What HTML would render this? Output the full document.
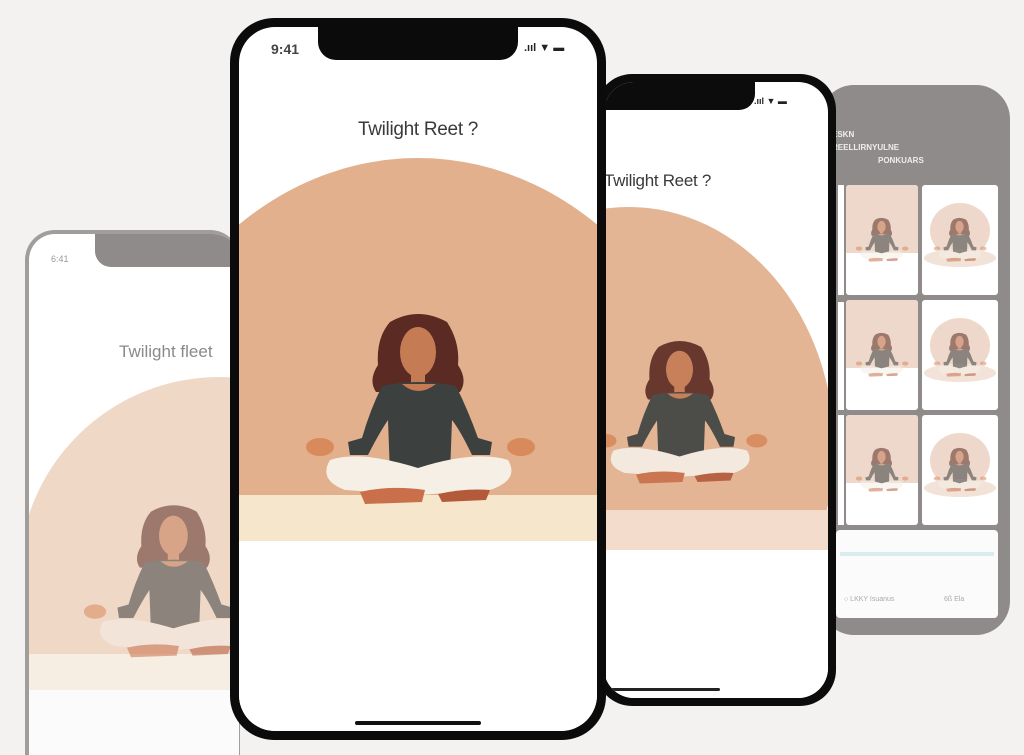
<!DOCTYPE html>
<html style="overflow:hidden;height:755px"><head><meta charset="utf-8">
<style>
*{margin:0;padding:0;box-sizing:border-box}
html,body{overflow:hidden}
body{width:1024px;height:755px;background:#f3f2f0;position:relative;overflow:hidden;font-family:"Liberation Sans",sans-serif}
.abs{position:absolute}
.t{color:#3a3a3a;font-size:19px;letter-spacing:-0.3px}
</style></head><body>
<svg width="0" height="0" style="position:absolute;top:0;left:0">
<defs>
<g id="w">
<path d="M90 12 Q118 -4 147 12 Q160 32 158 55 Q168 70 160 82 L76 82 Q68 70 78 55 Q76 28 90 12Z" fill="#5b2a22"/>
<ellipse cx="118" cy="42" rx="18" ry="25" fill="#c57b54"/>
<rect x="111" y="60" width="14" height="14" fill="#c57b54"/>
<path d="M82 76 Q118 68 156 76 Q168 100 178 128 L192 132 L190 145 L172 145 Q160 120 152 110 L150 165 L90 165 L88 110 Q78 125 68 145 L50 145 L48 132 L62 128 Q70 100 82 76Z" fill="#3c4140"/>
<path d="M102 74 Q118 88 136 74Z" fill="#c57b54"/>
<ellipse cx="20" cy="137" rx="14" ry="9" fill="#d98a5c"/>
<ellipse cx="221" cy="137" rx="14" ry="9" fill="#d98a5c"/>
<path d="M30 150 Q60 140 118 158 Q175 140 208 150 Q220 170 190 180 L118 185 L45 180 Q18 170 30 150Z" fill="#f5efe6"/>
<path d="M60 182 Q90 175 125 180 L122 192 L65 194Z" fill="#c9704a"/>
<path d="M138 184 Q165 178 190 180 L186 190 L142 192Z" fill="#b35a3a"/>
</g>
</defs>
</svg>

<div class="abs" style="left:820px;top:85px;width:190px;height:550px;background:#8f8b8a;border-radius:34px;"></div>
<div class="abs" style="left:832px;top:128px;color:#eee;font-size:8px;line-height:13px;font-weight:bold">ESKN<br>REELLIRNYULNE<br><span style="padding-left:46px">PONKUARS</span></div>
<div class="abs" style="left:838px;top:185px;width:162px;height:345px">
 <div class="abs" style="left:0;top:0;width:6px;height:110px;background:#fff"></div>
 <div class="abs" style="left:0;top:117px;width:6px;height:108px;background:#fff"></div>
 <div class="abs" style="left:0;top:230px;width:6px;height:110px;background:#fff"></div>
</div>
<div class="abs" style="left:846px;top:185px;width:72px;height:110px;background:#fff;border-radius:3px;overflow:hidden"><div style="height:68px;background:#eed8cb"></div><svg class="abs" style="left:8px;top:32px" width="56" height="46" viewBox="0 0 240 200" opacity=".55"><use href="#w"/></svg></div>
<div class="abs" style="left:922px;top:185px;width:76px;height:110px;background:#fff;border-radius:3px;overflow:hidden"><div class="abs" style="left:8px;top:18px;width:60px;height:55px;border-radius:50%;background:#eed8cb"></div><div class="abs" style="left:2px;top:64px;width:72px;height:18px;border-radius:50%;background:#f2e2d8"></div><svg class="abs" style="left:10px;top:32px" width="56" height="46" viewBox="0 0 240 200" opacity=".55"><use href="#w"/></svg></div>
<div class="abs" style="left:846px;top:300px;width:72px;height:110px;background:#fff;border-radius:3px;overflow:hidden"><div style="height:68px;background:#eed8cb"></div><svg class="abs" style="left:8px;top:32px" width="56" height="46" viewBox="0 0 240 200" opacity=".55"><use href="#w"/></svg></div>
<div class="abs" style="left:922px;top:300px;width:76px;height:110px;background:#fff;border-radius:3px;overflow:hidden"><div class="abs" style="left:8px;top:18px;width:60px;height:55px;border-radius:50%;background:#eed8cb"></div><div class="abs" style="left:2px;top:64px;width:72px;height:18px;border-radius:50%;background:#f2e2d8"></div><svg class="abs" style="left:10px;top:32px" width="56" height="46" viewBox="0 0 240 200" opacity=".55"><use href="#w"/></svg></div>
<div class="abs" style="left:846px;top:415px;width:72px;height:110px;background:#fff;border-radius:3px;overflow:hidden"><div style="height:68px;background:#eed8cb"></div><svg class="abs" style="left:8px;top:32px" width="56" height="46" viewBox="0 0 240 200" opacity=".55"><use href="#w"/></svg></div>
<div class="abs" style="left:922px;top:415px;width:76px;height:110px;background:#fff;border-radius:3px;overflow:hidden"><div class="abs" style="left:8px;top:18px;width:60px;height:55px;border-radius:50%;background:#eed8cb"></div><div class="abs" style="left:2px;top:64px;width:72px;height:18px;border-radius:50%;background:#f2e2d8"></div><svg class="abs" style="left:10px;top:32px" width="56" height="46" viewBox="0 0 240 200" opacity=".55"><use href="#w"/></svg></div>
<div class="abs" style="left:836px;top:530px;width:162px;height:88px;background:#fbfbfb;border-radius:4px"><div class="abs" style="left:4px;top:22px;width:154px;height:4px;background:#dbecef"></div><div class="abs" style="left:8px;top:66px;font-size:7px;color:#aaa">○ LKKY Isuanus</div><div class="abs" style="left:108px;top:66px;font-size:7px;color:#aaa">6ß Ela</div></div>

<div class="abs" style="left:25px;top:230px;width:215px;height:525px;background:#a09d9b;border-radius:30px 30px 0 0;"></div>
<div class="abs" style="left:29px;top:234px;width:210px;height:521px;background:#fff;border-radius:26px 26px 0 0;overflow:hidden">
 <div class="abs" style="left:66px;top:0;width:160px;height:33px;background:#8f8b8a;border-radius:0 0 0 16px"></div>
 <div class="abs" style="left:22px;top:20px;font-size:9px;color:#999">6:41</div>
 <div class="abs" style="left:90px;top:108px;font-size:17px;color:#8a8a8a;white-space:nowrap">Twilight fleet</div>
 <div class="abs" style="left:-10px;top:143px;width:400px;height:378px;border-radius:200px 200px 0 0;background:#f0d8c7"></div>
 <div class="abs" style="left:0;top:420px;width:210px;height:36px;background:#f6ede3"></div>
 <div class="abs" style="left:0;top:456px;width:210px;height:65px;background:#fbfbfb"></div>
 <svg class="abs" style="left:50px;top:268px" width="192" height="160" viewBox="0 0 240 200" opacity=".55"><use href="#w"/></svg>
</div>

<div class="abs" style="left:596px;top:74px;width:240px;height:632px;background:#0c0c0c;border-radius:36px;"></div>
<div class="abs" style="left:604px;top:82px;width:224px;height:616px;background:#fff;border-radius:30px;overflow:hidden">
 <div class="abs" style="left:-4px;top:-8px;width:155px;height:36px;background:#0c0c0c;border-radius:0 0 16px 0"></div>
 <div class="abs" style="left:150px;top:14px;font-size:9px;color:#222;font-weight:bold">.ııl ▼ ▬</div>
 <div class="abs t" style="left:0px;top:89px;font-size:17px;white-space:nowrap">Twilight Reet ?</div>
 <div class="abs" style="left:-180px;top:125px;width:410px;height:480px;border-radius:50%;background:#e3b595"></div>
 <div class="abs" style="left:0;top:428px;width:224px;height:40px;background:#f3dccb"></div>
 <div class="abs" style="left:0;top:468px;width:224px;height:148px;background:#fff"></div>
 <svg class="abs" style="left:-13px;top:256px" width="180" height="150" viewBox="0 0 240 200" opacity=".9"><use href="#w"/></svg>
 <div class="abs" style="left:6px;top:606px;width:110px;height:3px;background:#222;border-radius:2px"></div>
</div>

<div class="abs" style="left:230px;top:18px;width:376px;height:722px;background:#0b0b0b;border-radius:44px;"></div>
<div class="abs" style="left:239px;top:27px;width:358px;height:704px;background:#fff;border-radius:36px;overflow:hidden">
 <div class="abs" style="left:79px;top:-4px;width:200px;height:37px;background:#0b0b0b;border-radius:0 0 18px 18px"></div>
 <div class="abs" style="left:32px;top:14px;font-size:14px;font-weight:bold;color:#444">9:41</div>
 <div class="abs" style="left:285px;top:15px;font-size:11px;font-weight:bold;color:#222;white-space:nowrap">.ııl ▼ ▬</div>
 <div class="abs t" style="left:0;width:358px;text-align:center;top:92px">Twilight Reet ?</div>
 <div class="abs" style="left:-130px;top:131px;width:618px;height:573px;border-radius:309px 309px 0 0/360px 360px 0 0;background:#e2b08c"></div>
 <div class="abs" style="left:0;top:468px;width:358px;height:46px;background:#f6e6cc"></div>
 <div class="abs" style="left:0;top:514px;width:358px;height:190px;background:#fff"></div>
 <svg class="abs" style="left:61px;top:283px" width="240" height="200" viewBox="0 0 240 200"><use href="#w"/></svg>
 <div class="abs" style="left:116px;top:694px;width:126px;height:4px;background:#111;border-radius:2px"></div>
</div>
</body></html>
